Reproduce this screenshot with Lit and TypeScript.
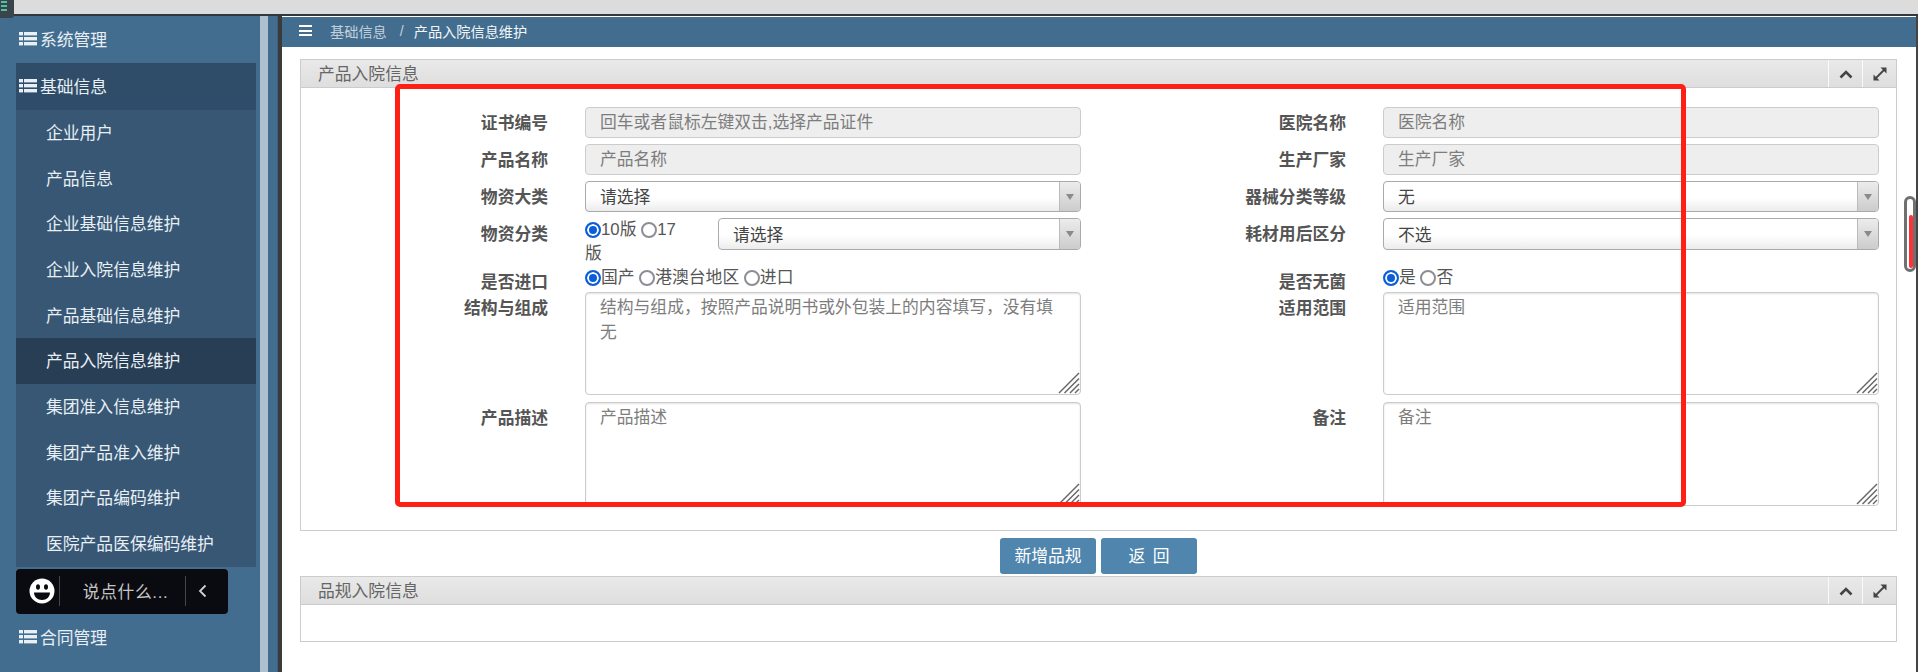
import { LitElement, html, css, svg } from "lit";
import { customElement } from "lit/decorators.js";

const SUB = ["企业用户","产品信息","企业基础信息维护","企业入院信息维护","产品基础信息维护","产品入院信息维护","集团准入信息维护","集团产品准入维护","集团产品编码维护","医院产品医保编码维护"];

const listIcon = html`<svg class="list" width="18" height="14" viewBox="0 0 18 14"><g fill="currentColor"><rect x="0" y="0" width="4" height="3.4"/><rect x="5" y="0" width="13" height="3.4"/><rect x="0" y="5" width="4" height="3.4"/><rect x="5" y="5" width="13" height="3.4"/><rect x="0" y="10" width="4" height="3.4"/><rect x="5" y="10" width="13" height="3.4"/></g></svg>`;

const grip = svg`<svg class="grip" width="22" height="22" viewBox="0 0 22 22"><g stroke="#666" stroke-width="1.5"><line x1="1" y1="21" x2="21" y2="1"/><line x1="6.500" y1="21" x2="21" y2="6.500"/><line x1="12" y1="21" x2="21" y2="12"/><line x1="17" y1="21" x2="21" y2="17"/></g></svg>`;

@customElement("app-root")
export class AppRoot extends LitElement {
  static styles = css`
    :host { display:block; position:relative; width:1918px; height:672px; overflow:hidden; background:#fff;
      font-family:"Liberation Sans","Noto Sans CJK SC",sans-serif; font-size:16.8px; color:#555; }
    * { box-sizing:border-box; }
    .top { height:16px; background:#dcdcdc; border-bottom:2px solid #33383c; position:relative; }
    .topicon { position:absolute; left:0; top:0; width:14px; height:18px; background:#39444d; border-radius:0 0 3px 0; display:flex; flex-direction:column; gap:2px; padding:1px 0 0 1px; }
    .topicon i { display:block; width:6px; height:2px; background:#4fc3a1; }
    .body { display:flex; height:656px; }
    .side { width:260px; background:#436d8f; padding:0 4px 0 16px; color:#e8eff5; flex:none; }
    .head { height:47px; display:flex; align-items:center; gap:3px; padding:0 0 2px 3px; }
    .head.on { background:#2f4d68; }
    .head.last { padding-bottom:0; }
    .list { flex:none; }
    .sub { background:#375774; }
    .sub div { height:45.7px; display:flex; align-items:center; padding:0 0 2px 30px; white-space:nowrap; }
    .sub div.on { background:#283e55; }
    .chat { margin-top:2px; width:212px; height:45px; background:#0a0b10; border-radius:4px; display:flex; align-items:center; color:#c4c4c4; }
    .smile { width:26px; margin-left:13px; flex:none; }
    .sep { width:1px; height:30px; background:#45464b; flex:none; }
    .chat .s1 { margin-left:4px; }
    .chat span { width:125px; text-align:center; white-space:nowrap; letter-spacing:.6px; padding-left:6px; }
    .chat .chev { margin-left:12px; flex:none; }
    .split { width:8px; background:#afc0cf; flex:none; }
    .gut { width:14px; flex:none; background:linear-gradient(90deg,#436d8f 0 60%,#3d5f7c 68%,#3a3a3a 72%,#3a3a3a); }
    .main { width:1634px; flex:none; background:#fff; padding-top:1px; }
    .rail { width:2px; background:#444; flex:none; }
    .crumb { height:30px; background:#436d8f; display:flex; align-items:center; font-size:14.2px; color:#c3d0db; padding:0 0 3px 17px; }
    .crumb .bars { display:flex; flex-direction:column; gap:2.5px; width:13px; margin-right:18px; }
    .crumb .bars i { display:block; height:2px; background:#fff; }
    .crumb .slash { margin:0 10px 0 13px; }
    .crumb b { font-weight:400; color:#f2f6f9; }
    .content { padding:12px 19px 0 18px; }
    .phead { height:29px; border:1px solid #ccc; background:linear-gradient(#e9e9e9,#dedede); display:flex; align-items:center; padding-left:17px; color:#666; }
    .phead .t { flex:1; padding-bottom:2px; }
    .tool { width:34px; height:27px; border-left:1px solid #fafafa; display:flex; align-items:center; justify-content:center; flex:none; }
    .pbody { border:1px solid #ccc; border-top:0; }
    .form { height:442px; padding-top:19px; display:grid; grid-template-columns:284px 496px 302px 496px; grid-auto-rows:min-content; align-content:start; }
    .lab { height:26px; text-align:right; padding:5px 37px 0 0; line-height:24px; font-weight:700; color:#555; white-space:nowrap; }
    .cell { margin-bottom:6px; min-width:0; }
    input { display:block; width:100%; height:31px; background:#eee; border:1px solid #ccc; border-radius:4px; padding:1px 14px 0; font:inherit; }
    input::placeholder, textarea::placeholder { color:#7d7d7d; opacity:1; }
    .sel { height:31px; border:1px solid #aaa; border-radius:4px; background:linear-gradient(#fff 55%,#ececec); display:flex; align-items:center; color:#444; overflow:hidden; }
    .sel.tall { height:32px; flex:1; }
    .sel span { flex:1; padding:0 0 1px 14px; }
    .sel i { width:21px; align-self:stretch; background:linear-gradient(#ececec,#ccc); border-left:1px solid #bbb; display:flex; align-items:center; justify-content:center; }
    .sel i::after { content:""; border:4px solid transparent; border-top:6px solid #8a8a8a; border-bottom:0; }
    .twin { display:flex; align-items:flex-start; gap:28px; }
    .radios { line-height:24px; color:#555; }
    .twin .radios { width:105px; flex:none; }
    .rrow { height:26px; }
    .r { display:inline-block; width:16px; height:16px; border-radius:50%; border:2px solid #8d8d97; vertical-align:-3px; background:#fff; }
    .r.on { border-color:#0a5fd9; box-shadow:inset 0 0 0 2px #fff; background:#0a5fd9; }
    .ta { position:relative; margin-bottom:7px; }
    textarea { display:block; width:100%; height:103px; border:1px solid #ccc; border-radius:4px; padding:2px 14px; font:inherit; line-height:25px; resize:none; box-shadow:inset 0 1px 2px rgba(0,0,0,.12); background:#fff; }
    textarea.big { height:104px; }
    .grip { position:absolute; right:1px; bottom:1px; }
    .btns { display:flex; justify-content:center; gap:5px; margin:7px 0 2px; }
    .btn { width:96px; height:36px; border:0; border-radius:3px; background:#5085ae; color:#fff; font:inherit; padding:0 0 2px; }
    .btn.ret { word-spacing:3px; }
    .empty { height:37px; }
    .mark { position:absolute; left:395px; top:84px; width:1291px; height:423px; border:5px solid #ff2015; border-radius:5px; pointer-events:none; }
    .scroll { position:absolute; left:1904px; top:196px; width:12px; height:76px; border:3px solid #707070; border-radius:6px; background:#fff; }
    .scroll::after { content:""; position:absolute; left:2px; top:16px; width:4px; height:53px; background:#ff3038; border-radius:2px; }
  `;

  private sel(v: string, tall = false) {
    return html`<div class="sel ${tall ? "tall" : ""}"><span>${v}</span><i></i></div>`;
  }
  private radios(items: string[]) {
    return items.map((t, i) => html`<span class="r ${i === 0 ? "on" : ""}"></span>${t}${i < items.length - 1 ? " " : ""}`);
  }
  private panelHead(t: string) {
    return html`<div class="phead"><span class="t">${t}</span>
      <div class="tool"><svg width="14" height="10" viewBox="0 0 14 10"><path d="M1.500 8.500 7 3l5.500 5.500" fill="none" stroke="#444" stroke-width="2.600"/></svg></div>
      <div class="tool"><svg width="14" height="14" viewBox="0 0 14 14"><path d="M7.500 0.500H13.500V6.500z M0.500 7.500V13.500H6.500z" fill="#444"/><path d="M3 11 11 3" stroke="#444" stroke-width="1.800"/></svg></div>
    </div>`;
  }

  render() {
    return html`
      <div class="top"><div class="topicon"><i></i><i></i><i></i></div></div>
      <div class="body">
        <aside class="side">
          <div class="head">${listIcon}系统管理</div>
          <div class="head on">${listIcon}基础信息</div>
          <div class="sub">${SUB.map((s, i) => html`<div class=${i === 5 ? "on" : ""}>${s}</div>`)}</div>
          <div class="chat">
            <svg class="smile" viewBox="0 0 26 26"><circle cx="13" cy="13" r="12.500" fill="#fff"/><ellipse cx="9" cy="9" rx="2" ry="2.800" fill="#0a0b10"/><ellipse cx="17" cy="9" rx="2" ry="2.800" fill="#0a0b10"/><path d="M5 14.500h16c0 4.500-3.500 7.500-8 7.500s-8-3-8-7.500z" fill="#0a0b10"/></svg>
            <div class="sep s1"></div>
            <span>说点什么...</span>
            <div class="sep"></div>
            <svg class="chev" width="9" height="14" viewBox="0 0 9 14"><path d="M7.500 1.500 2 7l5.500 5.500" fill="none" stroke="#d0d0d0" stroke-width="1.800"/></svg>
          </div>
          <div class="head last">${listIcon}合同管理</div>
        </aside>
        <div class="split"></div>
        <div class="gut"></div>
        <main class="main">
          <div class="crumb"><div class="bars"><i></i><i></i><i></i></div>基础信息<span class="slash">/</span><b>产品入院信息维护</b></div>
          <div class="content">
            ${this.panelHead("产品入院信息")}
            <div class="pbody"><div class="form">
              <div class="lab">证书编号</div><div class="cell"><input disabled placeholder="回车或者鼠标左键双击,选择产品证件"></div>
              <div class="lab">医院名称</div><div class="cell"><input disabled placeholder="医院名称"></div>
              <div class="lab">产品名称</div><div class="cell"><input disabled placeholder="产品名称"></div>
              <div class="lab">生产厂家</div><div class="cell"><input disabled placeholder="生产厂家"></div>
              <div class="lab">物资大类</div><div class="cell">${this.sel("请选择")}</div>
              <div class="lab">器械分类等级</div><div class="cell">${this.sel("无")}</div>
              <div class="lab">物资分类</div><div class="twin"><div class="radios">${this.radios(["10版", "17版"])}</div>${this.sel("请选择", true)}</div>
              <div class="lab">耗材用后区分</div><div class="cell">${this.sel("不选", true)}</div>
              <div class="lab">是否进口</div><div class="radios rrow">${this.radios(["国产", "港澳台地区", "进口"])}</div>
              <div class="lab">是否无菌</div><div class="radios rrow">${this.radios(["是", "否"])}</div>
              <div class="lab">结构与组成</div><div class="ta"><textarea placeholder="结构与组成，按照产品说明书或外包装上的内容填写，没有填无"></textarea>${grip}</div>
              <div class="lab">适用范围</div><div class="ta"><textarea placeholder="适用范围"></textarea>${grip}</div>
              <div class="lab">产品描述</div><div class="ta"><textarea class="big" placeholder="产品描述"></textarea>${grip}</div>
              <div class="lab">备注</div><div class="ta"><textarea class="big" placeholder="备注"></textarea>${grip}</div>
            </div></div>
            <div class="btns"><button class="btn">新增品规</button><button class="btn ret">返 回</button></div>
            ${this.panelHead("品规入院信息")}
            <div class="pbody empty"></div>
          </div>
        </main>
        <div class="rail"></div>
      </div>
      <div class="mark"></div>
      <div class="scroll"></div>
    `;
  }
}
